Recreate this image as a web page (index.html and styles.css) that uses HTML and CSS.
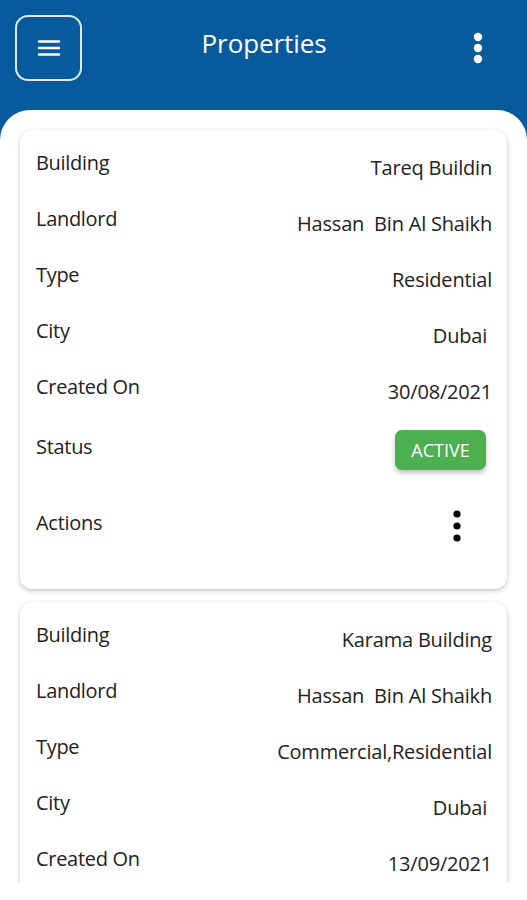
FILE: index.html
```html
<!DOCTYPE html>
<html>
<head>
<meta charset="utf-8">
<link rel="stylesheet" href="styles.css">
</head>
<body>
<div class="app">
  <header class="topbar">
    <button class="menu-btn" aria-label="Menu">
      <svg width="24" height="24" viewBox="0 0 24 24"><path d="M2 5.5h20M2 12h20M2 18.5h20" stroke="#fff" stroke-width="2.4" stroke-linecap="round" fill="none"/></svg>
    </button>
    <h1 class="title">Properties</h1>
    <button class="more-btn" aria-label="More">
      <svg width="12" height="34" viewBox="0 0 12 34"><circle cx="6" cy="6" r="4.2" fill="#fff"/><circle cx="6" cy="17" r="4.2" fill="#fff"/><circle cx="6" cy="28" r="4.2" fill="#fff"/></svg>
    </button>
  </header>
  <main class="sheet">
    <section class="card card-full">
      <div class="row"><span class="label">Building</span><span class="value">Tareq Buildin</span></div>
      <div class="row"><span class="label">Landlord</span><span class="value">Hassan&nbsp; Bin Al Shaikh</span></div>
      <div class="row"><span class="label">Type</span><span class="value">Residential</span></div>
      <div class="row"><span class="label">City</span><span class="value">Dubai&nbsp;</span></div>
      <div class="row"><span class="label">Created On</span><span class="value">30/08/2021</span></div>
      <div class="row row-status"><span class="label">Status</span><span class="badge">ACTIVE</span></div>
      <div class="row row-actions"><span class="label">Actions</span>
        <button class="act-btn" aria-label="Actions">
          <svg width="10" height="32" viewBox="0 0 10 32"><circle cx="5" cy="4" r="3.6" fill="#000"/><circle cx="5" cy="16" r="3.6" fill="#000"/><circle cx="5" cy="28" r="3.6" fill="#000"/></svg>
        </button>
      </div>
    </section>
    <section class="card card-cut">
      <div class="row"><span class="label">Building</span><span class="value">Karama Building</span></div>
      <div class="row"><span class="label">Landlord</span><span class="value">Hassan&nbsp; Bin Al Shaikh</span></div>
      <div class="row"><span class="label">Type</span><span class="value">Commercial,Residential</span></div>
      <div class="row"><span class="label">City</span><span class="value">Dubai&nbsp;</span></div>
      <div class="row"><span class="label">Created On</span><span class="value">13/09/2021</span></div>
    </section>
  </main>
  <div class="bottom"></div>
</div>
</body>
</html>
```
FILE: styles.css
```css
* { box-sizing: border-box; }
html, body { margin: 0; padding: 0; }
body {
  background: #ffffff;
  font-family: "Open Sans", "Noto Sans", sans-serif;
  color: #1f1f1f;
}
.app {
  width: 527px;
  height: 900px;
  overflow: hidden;
  background: #075a9b;
}
.topbar {
  height: 110px;
  display: grid;
  grid-template-columns: 1fr auto 1fr;
  align-items: start;
  padding: 15px 43px 0 15px;
}
.menu-btn {
  justify-self: start;
  width: 67px;
  height: 66px;
  border: 2px solid #dfe9f3;
  border-radius: 13px;
  background: transparent;
  display: flex;
  align-items: center;
  justify-content: center;
  padding: 0;
}
.title {
  margin: 10px 0 0 29px;
  font-size: 26px;
  font-weight: 400;
  color: #ffffff;
  letter-spacing: -0.1px;
}
.more-btn {
  justify-self: end;
  background: transparent;
  border: 0;
  padding: 0;
  margin-top: 16px;
  display: flex;
}
.sheet {
  background: #ffffff;
  border-radius: 30px 30px 0 0;
  height: 773px;
  padding: 20px 20px 0 20px;
  overflow: hidden;
}
.bottom {
  height: 17px;
  background: #ffffff;
}
.card {
  background: #ffffff;
  border-radius: 12px;
  box-shadow: 0 2px 5px rgba(0,0,0,0.22), 0 0 2px rgba(0,0,0,0.06);
  padding: 5px 15px 0 16px;
  margin-bottom: 13px;
}
.card-full { padding-bottom: 22px; }
.card-cut { padding-bottom: 40px; }
.row {
  height: 56px;
  display: flex;
  align-items: center;
  justify-content: space-between;
  font-size: 20px;
}
.label { transform: translateY(-1px); color: #222; letter-spacing: -0.3px; }
.value { transform: translateY(4px); color: #222; white-space: pre; letter-spacing: -0.2px; }
.row-status { height: 64px; }
.badge {
  background: #4caf50;
  color: #ffffff;
  font-size: 18px;
  width: 91px;
  height: 40px;
  border-radius: 7px;
  display: flex;
  align-items: center;
  justify-content: center;
  margin-right: 6px;
  transform: translateY(3px);
  box-shadow: 0 3px 5px rgba(0,0,0,0.25);
}
.row-actions { height: 88px; }
.act-btn {
  background: transparent;
  border: 0;
  padding: 0;
  margin-right: 30px;
  display: flex;
  transform: translateY(3px);
}
```
